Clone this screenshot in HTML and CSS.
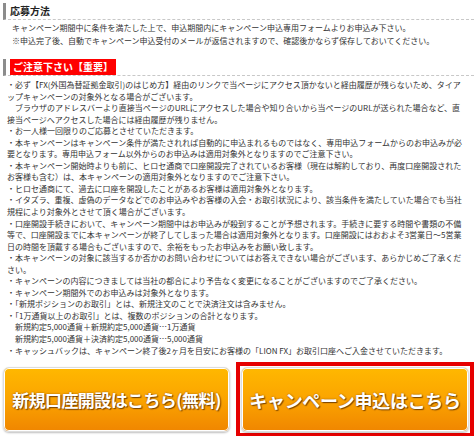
FILE: index.html
```html
<!DOCTYPE html>
<html lang="ja">
<head>
    <meta charset="UTF-8">
    <title>応募方法</title>
    <link rel="stylesheet" href="styles.css">
</head>
<body>
    <div class="campaign">
        <h3 class="ttl">応募方法</h3>
        <p class="lead">キャンペーン期間中に条件を満たした上で、申込期間内にキャンペーン申込専用フォームよりお申込み下さい。<br>※申込完了後、自動でキャンペーン申込受付のメールが返信されますので、確認後かならず保存しておいてください。</p>

        <h3 class="ttl ttl-red"><span>ご注意下さい【重要】</span></h3>
        <ul class="notes">
            <li>・必ず【FX(外国為替証拠金取引)のはじめ方】経由のリンクで当ページにアクセス頂かないと経由履歴が残らないため、タイア<br>ップキャンペーンの対象外となる場合がございます。<br>　ブラウザのアドレスバーより直接当ページのURLにアクセスした場合や知り合いから当ページのURLが送られた場合など、直<br>接当ページへアクセスした場合には経由履歴が残りません。</li>
            <li>・お一人様一回限りのご応募とさせていただきます。</li>
            <li>・本キャンペーンはキャンペーン条件が満たされれば自動的に申込まれるものではなく、専用申込フォームからのお申込みが必<br>要となります。専用申込フォーム以外からのお申込みは適用対象外となりますのでご注意下さい。</li>
            <li>・本キャンペーン開始時よりも前に、ヒロセ通商で口座開設完了されているお客様（現在は解約しており、再度口座開設された<br>お客様も含む）は、本キャンペーンの適用対象外となりますのでご注意下さい。</li>
            <li>・ヒロセ通商にて、過去に口座を開設したことがあるお客様は適用対象外となります。</li>
            <li>・イタズラ、重複、虚偽のデータなどでのお申込みやお客様の入会・お取引状況により、該当条件を満たしていた場合でも当社<br>規程により対象外とさせて頂く場合がございます。</li>
            <li>・口座開設手続きにおいて、キャンペーン期間中はお申込みが殺到することが予想されます。手続きに要する時間や書類の不備<br>等で、口座開設までに本キャンペーンが終了してしまった場合は適用対象外となります。口座開設にはおおよそ3営業日～5営業<br>日の時間を頂戴する場合もございますので、余裕をもったお申込みをお願い致します。</li>
            <li>・本キャンペーンの対象に該当するか否かのお問い合わせについてはお答えできない場合がございます、あらかじめご了承くだ<br>さい。</li>
            <li>・キャンペーンの内容につきましては当社の都合により予告なく変更になることがございますのでご了承ください。</li>
            <li>・キャンペーン期間外でのお申込みは対象外となります。</li>
            <li>・「新規ポジションのお取引」とは、新規注文のことで決済注文は含みません。</li>
            <li>・「1万通貨以上のお取引」とは、複数のポジションの合計となります。
                <span class="example">新規約定5,000通貨＋新規約定5,000通貨…1万通貨</span>
                <span class="example">新規約定5,000通貨＋決済約定5,000通貨…5,000通貨</span>
            </li>
            <li>・キャッシュバックは、キャンペーン終了後2ヶ月を目安にお客様の「LION FX」お取引口座へご入金させていただきます。</li>
        </ul>

        <div class="btns">
            <a class="btn" href="#">新規口座開設はこちら(無料)</a>
            <div class="btn-frame">
                <a class="btn btn-big" href="#">キャンペーン申込はこちら</a>
            </div>
        </div>
    </div>
</body>
</html>
```

FILE: styles.css
```css
* {
    box-sizing: border-box;
    margin: 0;
    padding: 0;
}

body {
    width: 474px;
    height: 436px;
    overflow: hidden;
    background: #fff;
    font-family: "Noto Sans CJK JP", "Noto Sans", sans-serif;
    color: #333;
}

.campaign {
    padding-top: 3px;
}

.ttl {
    margin-left: 3px;
    border-left: 3px solid #8c8c8c;
    border-bottom: 1px dashed #c8c8c8;
    padding-left: 4px;
    font-size: 10px;
    line-height: 16px;
    height: 17px;
    font-weight: bold;
    color: #222;
}

.ttl-red {
    margin-top: 12px;
}

.ttl-red span {
    display: inline-block;
    background: #f00;
    color: #fff;
    padding: 0 3px;
    line-height: 16px;
    font-weight: bold;
}

.lead {
    padding-left: 12px;
    margin-top: 1px;
    font-size: 8px;
    line-height: 13px;
    white-space: nowrap;
}

.notes {
    list-style: none;
    padding-left: 7px;
    margin-top: 3px;
    font-size: 8px;
    line-height: 11.55px;
    white-space: nowrap;
}

.example {
    display: block;
    padding-left: 8px;
}

.btns {
    display: flex;
    align-items: center;
    margin-top: 6px;
    padding-left: 3px;
    gap: 6px;
}

.btn {
    display: flex;
    align-items: center;
    justify-content: center;
    width: 227px;
    height: 65px;
    border: 1px solid #ddd;
    border-radius: 6px;
    background: linear-gradient(to bottom, #ffb800 0%, #fba400 50%, #f08600 100%);
    box-shadow: inset 0 0 0 1px #fff, 0 1px 2px rgba(0, 0, 0, 0.25);
    color: #fff;
    text-decoration: none;
    font-size: 17px;
    font-weight: bold;
    letter-spacing: -0.6px;
    text-shadow: 1px 1px 1px #7a4400, 0 0 2px #9a5a00;
}

.btn-frame {
    border: 4px solid #e60000;
    padding: 1px;
    flex: 1;
}

.btn-big {
    width: 100%;
    font-size: 18px;
    letter-spacing: -0.3px;
}
```
